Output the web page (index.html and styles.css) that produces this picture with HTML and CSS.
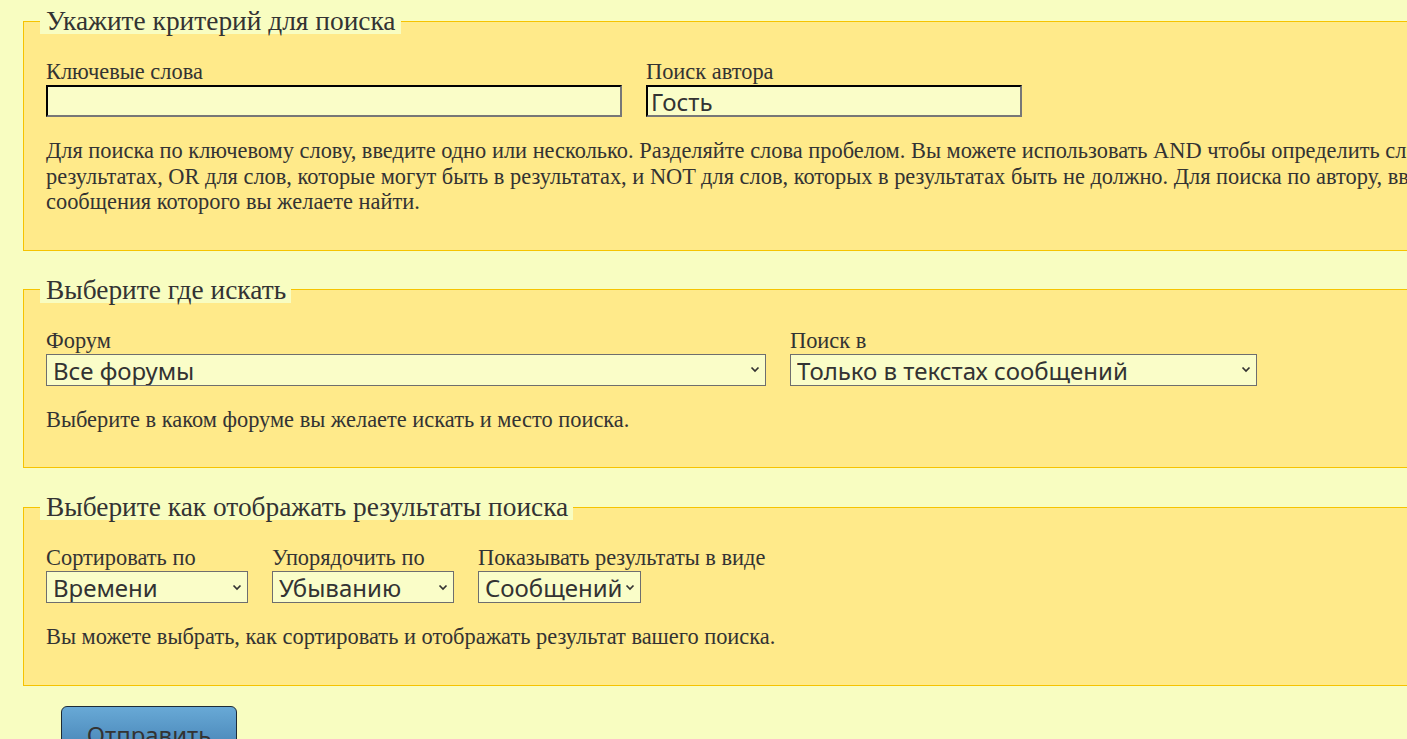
FILE: index.html
```html
<!DOCTYPE html>
<html lang="ru">
<head>
  <meta charset="UTF-8">
  <meta name="viewport" content="width=device-width, initial-scale=1.0">
  <title>Поиск</title>
  <link rel="stylesheet" href="styles.css">
</head>
<body>

  <form class="search-form">

    <!-- Criteria -->
    <fieldset class="panel">
      <legend>Укажите критерий для поиска</legend>
      <div class="row">
        <div class="field">
          <label for="keywords">Ключевые слова</label>
          <input type="text" id="keywords" class="text-input keywords">
        </div>
        <div class="field">
          <label for="author">Поиск автора</label>
          <input type="text" id="author" class="text-input author" value="Гость">
        </div>
      </div>
      <p class="hint">Для поиска по ключевому слову, введите одно или несколько. Разделяйте слова пробелом. Вы можете использовать AND чтобы определить слова, которые должны быть в результатах, OR для слов, которые могут быть в результатах, и NOT для слов, которых в результатах быть не должно. Для поиска по автору, введите имя пользователя, сообщения которого вы желаете найти.</p>
    </fieldset>

    <!-- Where -->
    <fieldset class="panel">
      <legend>Выберите где искать</legend>
      <div class="row">
        <div class="field">
          <label for="forum">Форум</label>
          <select id="forum" class="select forum">
            <option>Все форумы</option>
          </select>
        </div>
        <div class="field">
          <label for="search-in">Поиск в</label>
          <select id="search-in" class="select search-in">
            <option>Только в текстах сообщений</option>
          </select>
        </div>
      </div>
      <p class="hint">Выберите в каком форуме вы желаете искать и место поиска.</p>
    </fieldset>

    <!-- Display -->
    <fieldset class="panel">
      <legend>Выберите как отображать результаты поиска</legend>
      <div class="row">
        <div class="field">
          <label for="sort-by">Сортировать по</label>
          <select id="sort-by" class="select sort-by">
            <option>Времени</option>
          </select>
        </div>
        <div class="field">
          <label for="sort-dir">Упорядочить по</label>
          <select id="sort-dir" class="select sort-dir">
            <option>Убыванию</option>
          </select>
        </div>
        <div class="field">
          <label for="show-as">Показывать результаты в виде</label>
          <select id="show-as" class="select show-as">
            <option>Сообщений</option>
          </select>
        </div>
      </div>
      <p class="hint">Вы можете выбрать, как сортировать и отображать результат вашего поиска.</p>
    </fieldset>

    <div class="actions">
      <button type="submit" class="submit-button">Отправить</button>
    </div>

  </form>

</body>
</html>
```

FILE: styles.css
```css
* {
  box-sizing: border-box;
}

body {
  margin: 0;
  background: #f8fdc1;
  color: #333;
  font-family: 'Liberation Serif', 'Times New Roman', serif;
  font-size: 22.4px;
  overflow: hidden;
}

.search-form {
  width: 1760px;
  padding: 8px 0 0 23px;
}

/* Panels */
.panel {
  margin: 0 0 26px 0;
  padding: 25px 22px 35px 22px;
  background: #ffea8a;
  border: 1px solid #f6c300;
}

.panel legend {
  font-size: 27.4px;
  padding: 0 5px 0 6px;
  margin-left: -6px;
  background: #f8fdc1;
  line-height: 26px;
}

.row {
  display: flex;
  align-items: flex-start;
  gap: 24px;
}

.field {
  display: flex;
  flex-direction: column;
  align-items: flex-start;
}

.field label {
  line-height: 26px;
}

/* Inputs */
.text-input {
  height: 32px;
  padding: 0 3px;
  font-family: 'Noto Sans', 'Open Sans', sans-serif;
  font-size: 24px;
  color: #333;
  background: #fafdc8;
  border: 2px inset #767676;
  border-top-color: #222;
  border-left-color: #222;
  border-bottom-color: #777;
  border-right-color: #777;
}

.keywords {
  width: 576px;
}

.author {
  width: 376px;
}

/* Selects with a small chevron */
.select {
  -webkit-appearance: none;
  appearance: none;
  height: 32px;
  padding: 1px 14px 0 6px;
  line-height: 29px;
  font-family: 'Noto Sans', 'Open Sans', sans-serif;
  font-size: 24px;
  color: #333;
  background: #fafdc8 url("data:image/svg+xml,%3Csvg xmlns='http://www.w3.org/2000/svg' width='10' height='7' viewBox='0 0 10 7'%3E%3Cpath d='M1.5 1.5l3.5 3.5 3.5-3.5' fill='none' stroke='%23333' stroke-width='1.7'/%3E%3C/svg%3E") no-repeat right 5px center;
  border: 1px solid #6e6e6e;
  border-radius: 0;
}

.forum { width: 720px; }
.search-in { width: 467px; }
.sort-by { width: 202px; }
.sort-dir { width: 182px; }
.show-as { width: 163px; }

.hint {
  margin: 21px 0 0 0;
  line-height: 25.5px;
  width: 1665px;
}

/* Submit */
.actions {
  margin-top: -6px;
  padding-left: 38px;
}

.submit-button {
  width: 176px;
  height: 48px;
  border: 1px solid #1e2b36;
  border-radius: 6px;
  background: linear-gradient(#68a9d6, #4582b4);
  color: #333;
  font-family: 'Noto Sans', 'Open Sans', sans-serif;
  font-size: 24px;
  padding: 10px 0 0 0;
}
```
